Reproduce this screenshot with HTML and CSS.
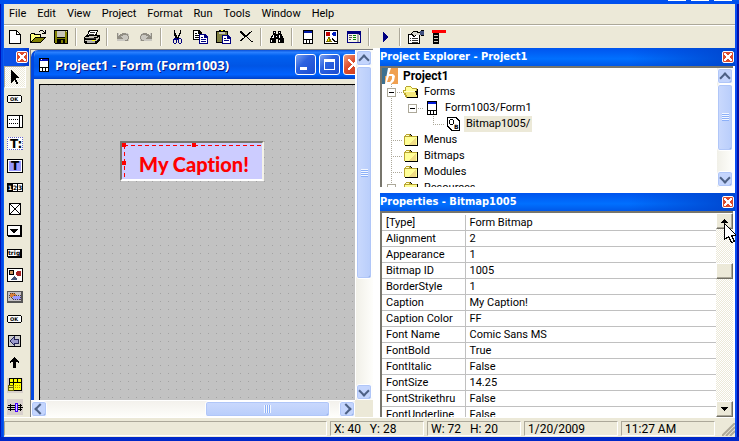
FILE: index.html
```html
<!DOCTYPE html>
<html lang="en">
<head>
<meta charset="utf-8">
<title>Project1</title>
<link rel="stylesheet" href="styles.css">
</head>
<body>
<div class="app">
  <div class="app-title"><span></span><span></span><span></span></div>

  <nav class="menu">
    <button>File</button><button>Edit</button><button>View</button><button>Project</button><button>Format</button><button>Run</button><button>Tools</button><button>Window</button><button>Help</button>
  </nav>

  <div class="toolbar">
    <button aria-label="New"><svg viewBox="0 0 16 16"><path d="M3 2h7l4 4v9H3z" fill="#fff"/><path d="M2 1h8v1H3v12h10V6h1v9H2zM9 2h2v1h1v1h1v1h1v1H9z" fill="#000"/><path d="M10 3h1v1h1v1h-2z" fill="#fff"/></svg></button>
    <button aria-label="Open"><svg viewBox="0 0 16 16"><path d="M0 5h1V4h4v1h6v4H5L1 14H0z" fill="#000"/><path d="M1 5h3v1h6v3H4l-3 4z" fill="#ffff80"/><path d="M1 14l4-6h11l-5 6z" fill="#000"/><path d="M2 13l3-4h9l-3 4z" fill="#808000"/><path d="M9 2h1V1h3v1h1v1h1V1h1v4h-4V4h2V3h-1V2h-3v1H9z" fill="#000"/></svg></button>
    <button aria-label="Save"><svg viewBox="0 0 16 16"><path d="M1 1h14v14H2l-1-1z" fill="#000"/><path d="M2 2h2v7h8V2h2v12H2z" fill="#808000"/><path d="M4 2h8v6H4zM13 2h1v1h-1zM10 11h2v3h-2z" fill="#c8c4b8"/><path d="M4 10h8v4h-2v-3H8v3H4z" fill="#000"/></svg></button>
    <i class="sep"></i>
    <button aria-label="Print"><svg viewBox="0 0 16 16"><path d="M5 1h9l-1 5h2l1 1v4l-3 3v1H1l-1-2V8l2-2h1z" fill="#000"/><path d="M6 2h7l-2 4H4z" fill="#fff"/><path d="M6 3h5v1H6zM5 5h5v1H5zM2 9h10v1H2z" fill="#333"/><path d="M2 7h11v1H1v1h11v2H1v1h12l2-3V8h-1v1h-2z" fill="#c8c4b8"/><path d="M3 12h8v2H3z" fill="#aaa"/><path d="M8 11h3v1H8z" fill="#ff0"/></svg></button>
    <i class="sep"></i>
    <button disabled aria-label="Undo"><svg viewBox="0 0 16 16"><path d="M2 4h2v2h1V5h2V4h5l2 2v6H2z" fill="#c9c7c0"/><path d="M2 4h1v3h1V6h1V5h2V4h4v1h2v2h1v3h-1v2h-3v-1h2v-1h1V7h-1V6H8v1H6v1h1v1h1v1H2z" fill="#918e84"/></svg></button>
    <button disabled aria-label="Redo"><svg viewBox="0 0 16 16"><path d="M14 4h-2v2h-1V5H9V4H4L2 6v6h12z" fill="#c9c7c0"/><path d="M14 4h-1v3h-1V6h-1V5H9V4H5v1H3v2H2v3h1v2h3v-1H4v-1H3V7h1V6h4v1h2v1H9v1H8v1h6z" fill="#918e84"/></svg></button>
    <i class="sep"></i>
    <button aria-label="Cut"><svg viewBox="0 0 16 16"><path d="M5 1h1v3h1v2h1v2h1V6h1V4h1V1h1v4h-1v2h-1v2H9v1H8v1H7V9H6V7H5z" fill="#000"/><path d="M5 9h3v1h1V9h3v1h1v4h-1v1h-2v-1H9v-3H8v3H7v1H5v-1H4v-4h1zM5 11v3h2v-3zM10 10v4h2v-4z" fill="#000080" fill-rule="evenodd"/></svg></button>
    <button aria-label="Copy"><svg viewBox="0 0 16 16"><path d="M1 1h6l3 3v7H1z" fill="#000"/><path d="M2 2h4v3h3v5H2z" fill="#fff"/><path d="M3 4h2v1H3zM3 6h4v1H3zM3 8h4v1H3z" fill="#000"/><path d="M7 5h6l3 3v7H7z" fill="#000080"/><path d="M8 6h4v3h3v5H8z" fill="#fff"/><path d="M9 8h2v1H9zM9 10h5v1H9zM9 12h5v1H9z" fill="#000080"/></svg></button>
    <button aria-label="Paste"><svg viewBox="0 0 16 16"><path d="M1 2h3V1h6v1h3v12H1z" fill="#000"/><path d="M2 3h10v10H2z" fill="#808040"/><path d="M4 3h6v2H4z" fill="#c8c4b8"/><path d="M6 1h2v1H6z" fill="#ff0"/><path d="M7 6h6l3 3v6H7z" fill="#000080"/><path d="M8 7h4v3h3v4H8z" fill="#fff"/><path d="M9 9h2v1H9zM9 11h5v1H9z" fill="#000080"/></svg></button>
    <button aria-label="Delete"><svg viewBox="0 0 16 16"><path d="M2 2h2v1h1v1h1v1h1v1h2V5h1V4h1V3h2V2h1v1h-1v1h-1v1h-1v1h-1v1H9v1h1v1h1v1h1v1h1v1h2v1h-2v-1h-1v-1h-1v-1h-1v-1H9v-1H7v1H6v1H5v1H4v1H2v-1h1v-1h1v-1h1V9h1V7H5V6H4V5H3V4H2z" fill="#000"/></svg></button>
    <i class="sep"></i>
    <button aria-label="Find"><svg viewBox="0 0 16 16"><path d="M4 2h3v3h2V2h3v3l1 1 2 4v4H9v-4H7v4H1v-4l2-4 1-1z" fill="#000"/><path d="M5 3h1v1H5zM10 3h1v1h-1zM4 6h1v3H3V8h1zM10 6h1v3h-1zM2 11h1v2H2zM10 11h1v2h-1zM7 7h1v1H7z" fill="#fff"/></svg></button>
    <i class="sep"></i>
    <button aria-label="Form"><svg viewBox="0 0 16 16"><path d="M3 1h10v14H3z" fill="#000"/><path d="M4 4h8v6H4zM4 11h2v3H4zM7 11h2v3H7zM10 11h2v3h-2z" fill="#fff"/><path d="M4 2h8v2H4z" fill="#0018a8"/></svg></button>
    <button aria-label="Bitmap"><svg viewBox="0 0 16 16"><path d="M1 1h14v14H1z" fill="#000"/><path d="M2 2h12v12H2z" fill="#fff"/><path d="M3 3h4v4H3z" fill="#c00000"/><path d="M10 3h2l1 1v2l-1 1h-2L9 6V4z" fill="#0020c0"/><path d="M6 8h1v2h1v2h1v1H3v-1h1v-2h1V8z" fill="#807000"/><path d="M5 10h1v2H5z" fill="#ff0"/><path d="M9 9h1v1h1v1h1v1h2v1h-3v-1h-1v-1H9z" fill="#000"/></svg></button>
    <button aria-label="Menu editor"><svg viewBox="0 0 16 16"><path d="M1 2h14v12H1z" fill="#000080"/><path d="M2 5h9v8H2zM13 6h1v7h-1z" fill="#f5f5e8"/><path d="M3 6h3v1H3zM3 8h3v1H3zM3 10h2v1H3z" fill="#555"/><path d="M7 6h3v1H7zM7 8h3v1H7zM7 10h3v1H7z" fill="#080"/><path d="M11 5h2v8h-2z" fill="#aaa"/></svg></button>
    <i class="sep"></i>
    <button aria-label="Run"><svg viewBox="0 0 16 16"><path d="M6 3h1v1h1v1h1v1h1v1h1v2h-1v1H9v1H8v1H7v1H6z" fill="#000080"/></svg></button>
    <i class="sep"></i>
    <button aria-label="Properties"><svg viewBox="0 0 16 16"><path d="M0 5h12v10H0z" fill="#000"/><path d="M1 6h10v8H1z" fill="#fff"/><path d="M2 9h1v1H2zM4 9h6v1H4zM2 11h1v1H2zM4 11h6v1H4zM4 13h6v1H4z" fill="#333"/><path d="M3 4l3-2h4v1h3V1h3v6h-3V6H9l-3 2-2-1z" fill="#000"/><path d="M4 4l2-1h3v1h4v2H8L6 7z" fill="#d8d8d0"/><path d="M12 2h4v4h-4z" fill="#405080"/></svg></button>
    <button aria-label="Code"><svg viewBox="0 0 16 16"><path d="M1 1h14v3H1z" fill="#f00"/><path d="M2 4h6v11H2z" fill="#000"/><path d="M3 6h4v1H3zM3 9h4v1H3zM3 12h4v1H3z" fill="#c8c4b8"/></svg></button>
  </div>

  <main class="main">
    <aside class="palette">
      <header class="palette-head"><button class="close" aria-label="Close toolbox"></button></header>
      <button class="on" aria-label="Pointer"><svg viewBox="0 0 16 16"><path d="M4 1h1v1h1v1h1v1h1v1h1v1h1v1h1v1h1v1h-3v2h1v2h1v2H9v-2H8v-2H7v1H6v1H5v1H4z" fill="#000"/></svg></button>
      <button aria-label="Button"><svg viewBox="0 0 16 16"><path d="M1 4h13v8H1zM0 5h15v6H0z"/><path d="M1 5h13v6H1z" fill="#fff"/><text x="3" y="10" class="t5">OK</text></svg></button>
      <button aria-label="List"><svg viewBox="0 0 16 16"><path d="M0 2h16v13H0z"/><path d="M1 3h11v11H1zM13 3h2v11h-2z" fill="#fff"/><path d="M2 6.500h10M2 10.500h10" stroke="#000" stroke-dasharray="1 1"/></svg></button>
      <button aria-label="Label"><svg viewBox="0 0 16 16"><path d="M0 2h16v13H0z" fill="#fff"/><path d="M.5 2.500h15v12H.5z" fill="none" stroke="#66c" stroke-dasharray="1 1"/><text x="3" y="13" class="t11">T:</text></svg></button>
      <button aria-label="Text field"><svg viewBox="0 0 16 16"><path d="M0 2h16v14H0z"/><path d="M1 3h14v12H1z" fill="#fff"/><path d="M2 4h12v10H2z" fill="#99f"/><text x="4" y="13" class="t11">T</text></svg></button>
      <button aria-label="Number"><svg viewBox="0 0 16 16"><path d="M0 4h16v9H0z"/><path d="M6 5h4v7H6zM11 5h4v7h-4z" fill="#fff"/><text x="1" y="11" class="t6 w">1</text><text x="6" y="11" class="t6">2</text><text x="11" y="11" class="t6">3</text></svg></button>
      <button aria-label="Check box"><svg viewBox="0 0 16 16"><path d="M2 2h12v12H2z"/><path d="M3 3h10v10H3z" fill="#fff"/><path d="M3 3l10 10M13 3L3 13" stroke="#000"/></svg></button>
      <button aria-label="Drop-down"><svg viewBox="0 0 16 16"><path d="M0 2h14l1 1v11H1l-1-1z"/><path d="M1 3h12v9H1z" fill="#fff"/><path d="M3 6h8v1h-1v1H9v1H8v1H6V9H5V8H4V7H3z"/></svg></button>
      <button aria-label="Trigger"><svg viewBox="0 0 16 16"><path d="M0 4h15v9H1l-1-1z"/><path d="M1 5h12v6H1z" fill="#fff"/><text x="1" y="10" class="t6">trig</text></svg></button>
      <button aria-label="Form bitmap"><svg viewBox="0 0 16 16"><path d="M0 1h16v14H0z"/><path d="M1 2h14v12H1z" fill="#fff"/><path d="M2 3h5v5H2z"/><path d="M3 4h3v3H3z" fill="#c96"/><path d="M10 4h3l1 1v3l-1 1h-3L9 8V5z" fill="#a22"/><path d="M7 9h1v1h1v1h1v2H4v-1h1v-1h1v-1h1z" fill="#457"/></svg></button>
      <button aria-label="Gadget"><svg viewBox="0 0 16 16"><path d="M0 2h16v12H0z" fill="#555"/><path d="M1 3h13v9H1z" fill="#c4c0c4"/><path d="M3 4h4v1h2v3H3z" fill="#d9803c"/><path d="M6 7h8v4H6z" fill="#99f"/><path d="M2.500 4.500h5v2h6v4h-8v-2h-3z" fill="none" stroke="#543" stroke-dasharray="1 1"/></svg></button>
      <button aria-label="Repeat button"><svg viewBox="0 0 16 16"><path d="M1 4h13v8H1zM0 5h15v6H0z"/><path d="M1 5h13v6H1z" fill="#fff"/><text x="3" y="10" class="t5">OK</text></svg></button>
      <button aria-label="Shift"><svg viewBox="0 0 16 16"><path d="M1 2h13v12H1z"/><path d="M2 3h11v10H2z" fill="#ccc"/><path d="M3 8l4-4v2h4v4H7v2z" fill="#99c" stroke="#225"/></svg></button>
      <button aria-label="Graffiti"><svg viewBox="0 0 16 16"><path d="M7 2h1v1h1v1h1v1h1v1h1v2h-1V7H9v6H6V7H4v1H3V6h1V5h1V4h1V3h1z"/></svg></button>
      <button aria-label="Table"><svg viewBox="0 0 16 16"><path d="M0 1h16v15H0z" fill="#d8d0cc"/><path d="M2 1h13v13H2z"/><path d="M3 2h3v3H3zM7 2h3v3H7zM11 2h3v3h-3zM3 6h3v2H3zM7 6h7v7H7z" fill="#ff0"/><path d="M8 8.500h6M8 10.500h6" stroke="#b90" stroke-dasharray="1 1"/><circle cx="4" cy="11" r="3" fill="#ee5" stroke="#660"/><path d="M2 10h4v1H2z" fill="#660"/></svg></button>
      <button aria-label="Slider"><svg viewBox="0 0 16 16"><path d="M0 0h16v16H0z" fill="#d8d0cc"/><path d="M1 6h14v1H1zM0 8h16v1H0zM1 10h14v1H1zM3 5h1v7H3zM13 5h1v7h-1z"/><path d="M8.500 4.500h2v8h-2z" fill="#dcf" stroke="#40f"/></svg></button>
    </aside>

    <section class="mdi">
      <div class="form-window">
        <header class="form-title">
          <svg viewBox="0 0 10 14"><path d="M0 0h10v14H0z"/><path d="M1 3h8v6H1zM1 10h2v3H1zM4 10h2v3H4zM7 10h2v3H7z" fill="#fff"/><path d="M1 1h8v2H1z" fill="#0010c0"/><path d="M2 1h1v1H2z" fill="#fff"/></svg>
          <h1>Project1 - Form (Form1003)</h1>
          <button class="win-btn min" aria-label="Minimize"></button>
          <button class="win-btn max" aria-label="Maximize"></button>
          <button class="win-btn end" aria-label="Close"></button>
        </header>
        <div class="canvas">
          <div class="bitmap">
            <span class="caption">My Caption!</span>
            <i class="handle tl"></i><i class="handle tm"></i><i class="handle ml"></i>
          </div>
        </div>
      </div>
      <div class="xp-scroll vert">
        <button class="arrow up" aria-label="Scroll up"></button>
        <div class="track"><div class="thumb form-v"><i></i></div></div>
        <button class="arrow down" aria-label="Scroll down"></button>
      </div>
      <div class="xp-scroll horz">
        <button class="arrow left" aria-label="Scroll left"></button>
        <div class="track"><div class="thumb form-h"><i></i></div></div>
        <button class="arrow right" aria-label="Scroll right"></button>
      </div>
    </section>

    <div class="docks">
      <section class="dock explorer">
        <header class="dock-title"><h2>Project Explorer - Project1</h2><button class="close" aria-label="Close explorer"></button></header>
        <div class="dock-body">
          <ul class="tree">
            <li><svg viewBox="0 0 16 16"><path d="M0 0h16v16H0z" fill="#f0a050"/><path d="M0 0h7v8H3v8H0z" fill="#3d7191"/><path d="M6 0h3L7 6h4l2 2-1 5-3 3H3zm1 8l-2 6h3l2-3V8z" fill="#fff" fill-rule="evenodd" shape-rendering="auto"/></svg><b>Project1</b></li>
            <li><i class="cell v h"><span class="toggle"></span></i><svg viewBox="0 0 16 16"><path d="M2 3h1V2h5v1h1v1h5v1h1v8h-1v1H3v-1H2v-2H1V9H0V6h2z" fill="#b9a52f"/><path d="M3 3h5v1h1v1h4v2H3z" fill="#ffff98"/><path d="M1 7h11v2h1v2h1v2H4v-2H3V9H1z" fill="#f6ea7c"/><path d="M1 7h11v1H1z" fill="#ffc"/><path d="M14 5h1v9H4v-1h10v-2h-1V8h-1V7h2z"/></svg><span>Forms</span></li>
            <li><i class="cell v"></i><i class="cell h"><span class="toggle"></span></i><svg viewBox="0 0 16 16"><path d="M3 1h10v14H3z"/><path d="M4 4h8v6H4zM4 11h2v3H4zM7 11h2v3H7zM10 11h2v3h-2z" fill="#fff"/><path d="M4 2h8v2H4z" fill="#0018d8"/></svg><span>Form1003/Form1</span></li>
            <li><i class="cell v"></i><i class="cell"></i><i class="cell v half h"></i><svg viewBox="0 0 16 16"><path d="M2 1h9l4 3v11H6l-4-4z"/><path d="M3 2h7l4 3v9H7l-4-4z" fill="#fff"/><path d="M4 4h1v4H4zM8 4h1v4H8zM5 3h3v1H5zM5 8h3v1H5z"/><text x="9" y="13" class="t6">B</text></svg><span class="picked">Bitmap1005/</span></li>
            <li><i class="cell v h"></i><svg viewBox="0 0 16 16"><use href="#folder"/></svg><span>Menus</span></li>
            <li><i class="cell v h"></i><svg viewBox="0 0 16 16"><use href="#folder"/></svg><span>Bitmaps</span></li>
            <li><i class="cell v h"></i><svg viewBox="0 0 16 16"><use href="#folder"/></svg><span>Modules</span></li>
            <li><i class="cell v h"><span class="toggle"></span></i><svg viewBox="0 0 16 16"><g id="folder"><path d="M1 4l2-2h4l2 2h6v10H2l-1-1z"/><path d="M1 4l2-2h3l2 2h6v9H1z" fill="#b9a52f"/><path d="M2 5h12v8H2z" fill="#ffff98"/><path d="M13 6v7H5z" fill="#f1dd85"/><path d="M3 3h3v1H3z" fill="#ffc"/></g></svg><span>Resources</span></li>
          </ul>
          <div class="xp-scroll vert">
            <button class="arrow up" aria-label="Scroll up"></button>
            <div class="track"><div class="thumb tree-v"><i></i></div></div>
            <button class="arrow down" aria-label="Scroll down"></button>
          </div>
        </div>
      </section>

      <section class="dock properties">
        <header class="dock-title"><h2>Properties - Bitmap1005</h2><button class="close" aria-label="Close properties"></button></header>
        <div class="dock-body">
          <div class="grid">
            <table>
              <tr><th>[Type]</th><td>Form Bitmap</td></tr>
              <tr><th>Alignment</th><td>2</td></tr>
              <tr><th>Appearance</th><td>1</td></tr>
              <tr><th>Bitmap ID</th><td>1005</td></tr>
              <tr><th>BorderStyle</th><td>1</td></tr>
              <tr><th>Caption</th><td>My Caption!</td></tr>
              <tr><th>Caption Color</th><td>FF</td></tr>
              <tr><th>Font Name</th><td>Comic Sans MS</td></tr>
              <tr><th>FontBold</th><td>True</td></tr>
              <tr><th>FontItalic</th><td>False</td></tr>
              <tr><th>FontSize</th><td>14.25</td></tr>
              <tr><th>FontStrikethru</th><td>False</td></tr>
              <tr><th>FontUnderline</th><td>False</td></tr>
            </table>
          </div>
          <div class="classic-scroll">
            <button aria-label="Scroll up"><svg viewBox="0 0 8 8"><path d="M3 2h1v1h1v1h1v1h1v1H0V5h1V4h1V3h1z"/></svg>
              <svg class="pointer" viewBox="0 0 12 21"><path d="M.5.5v16l4-3 3 6 3-1-3-6h5z" fill="#fff" stroke="#000"/></svg></button>
            <div class="classic-track"><div class="classic-thumb"></div></div>
            <button aria-label="Scroll down"><svg viewBox="0 0 8 8"><path d="M0 2h7v1H6v1H5v1H4v1H3V5H2V4H1V3H0z"/></svg></button>
          </div>
        </div>
      </section>
    </div>
  </main>

  <footer class="status">
    <span></span>
    <span>X: 40&nbsp;&nbsp; Y: 28</span>
    <span>W: 72&nbsp;&nbsp; H: 20</span>
    <span>1/20/2009</span>
    <span>11:27 AM</span>
    <svg viewBox="0 0 13 13"><path d="M0 13L13 0M4 13l9-9M8 13l5-5" stroke="#aca899" stroke-width="2"/></svg>
  </footer>
</div>
</body>
</html>
```
FILE: styles.css
```css
* { box-sizing: border-box; }
body {
  margin: 0;
  font: 11px/16px Roboto, "Liberation Sans", sans-serif;
  color: #000;
  background: #ece9d8;
}
button { padding: 0; border: 0; background: none; font: inherit; color: inherit; display: block; }
svg { display: block; width: 16px; height: 16px; flex: none; shape-rendering: crispEdges; }
h1, h2, ul { margin: 0; padding: 0; }
i { font-style: normal; }
svg text { font-family: "DejaVu Sans", sans-serif; font-weight: bold; }
.t5 { font-size: 5px; }
.t6 { font-size: 6px; }
.t11 { font-size: 12px; }
.w { fill: #fff; }

.app {
  height: 100vh;
  display: flex;
  flex-direction: column;
  background: linear-gradient(90deg, #0010b8 0 1px, #0048e8 1px 3px, #0a5cf0 3px 4px, transparent 4px calc(100% - 4px), #0a4cf0 calc(100% - 4px) calc(100% - 2px), #0010a8 calc(100% - 2px)) #ece9d8;
  padding: 0 4px;
  border-bottom: 4px solid #0028c8;
  overflow: hidden;
}
.app-title { height: 4px; margin: 0 -4px; padding-right: 7px; background: #0050ee; display: flex; justify-content: flex-end; gap: 5px; flex: none; }
.app-title span { width: 18px; height: 1px; background: #fff; }

.menu { height: 22px; display: flex; align-items: center; gap: 1px; padding-bottom: 2px; border-bottom: 1px solid #fff; box-shadow: inset 0 -1px #aca899; flex: none; }
.menu button { padding: 0 5px; }

.toolbar { height: 22px; display: flex; align-items: center; margin-left: -1px; flex: none; }
.toolbar button { width: 23px; height: 22px; display: grid; place-items: center; flex: none; }
.sep { width: 8px; height: 18px; background: linear-gradient(90deg, transparent 3px, #aca899 3px 4px, #fff 4px 5px, transparent 5px); flex: none; }

.main { flex: 1; min-height: 0; display: grid; grid-template-columns: 26px 343fr 362fr; }

.palette { display: flex; flex-direction: column; overflow: hidden; }
.palette-head { height: 18px; flex: none; margin-right: 1px; display: flex; justify-content: flex-end; align-items: center; padding-right: 1px; background: linear-gradient(90deg, #0a52e8, #0a52e8 60%, #0038d0); }
.palette > button { height: 22px; flex: none; width: 22px; display: grid; place-items: center; }
.palette > .on { background: repeating-conic-gradient(#fff 0 25%, #ece9d8 0 50%) 0 0 / 2px 2px; border: 1px solid #fff; border-top-color: #aca899; border-left-color: #aca899; }

.close { width: 12px; height: 12px; flex: none; border: 1px solid #fff; border-radius: 2px;
  background:
    linear-gradient(45deg, transparent 42%, #fff 42% 58%, transparent 58%) center / 8px 8px no-repeat,
    linear-gradient(-45deg, transparent 42%, #fff 42% 58%, transparent 58%) center / 8px 8px no-repeat,
    #dc4c2c; }

.mdi { display: grid; grid-template-columns: 1fr 18px; grid-template-rows: 1fr 17px; min-height: 0; border: solid #808080; border-width: 1px 0 0 1px; margin-top: 1px; }
.form-window { overflow: hidden; min-width: 0; min-height: 0; display: flex; flex-direction: column; border-left: 3px solid #0048e0; border-top-left-radius: 7px; background: #ece9d8; }
.form-title { height: 29px; flex: none; display: flex; align-items: center; gap: 3px; margin-right: -9px; padding-left: 5px; background: linear-gradient(#0a4fd8, #2a80ff 8%, #0060f0 20%, #0055e5 55%, #0062ff 85%, #0040c8); }
.form-title svg { width: 10px; height: 14px; }
.form-title h1 { flex: 1; margin-left: 3px; font: bold 13px/20px "Open Sans", sans-serif; color: #fff; text-shadow: 1px 1px #0a1883; white-space: nowrap; }
.win-btn { width: 21px; height: 21px; flex: none; border: 1px solid #fff; border-radius: 3px; background: linear-gradient(135deg, #7ba2f0, #2c62e0 40%, #1c4cd0); position: relative; }
.win-btn::before { content: ""; position: absolute; }
.min::before { left: 4px; bottom: 4px; width: 7px; height: 3px; background: #fff; }
.max::before { inset: 4px; border: 1px solid #fff; border-top-width: 3px; }
.end { background: linear-gradient(135deg, #f0a080, #e05030 40%, #c83818); }
.end::before { inset: 4px; background: linear-gradient(45deg, transparent 42%, #fff 42% 58%, transparent 58%), linear-gradient(-45deg, transparent 42%, #fff 42% 58%, transparent 58%); }
.canvas { flex: 1; position: relative; margin: 5px 0 0 5px; border: solid #000; border-width: 1px 0 0 1px; background: conic-gradient(from 270deg at 1px 1px, #a2a2a2 90deg, #c2c2c2 0) 0 0 / 8px 8px; }
.bitmap { position: absolute; left: 80px; top: 56px; width: 144px; height: 40px; display: grid; place-items: center; background: #ccccff; border: 2px solid; border-color: #77756c #f4f2e8 #fff #77756c; }
.bitmap::before { content: ""; position: absolute; inset: 2px 0 0 2px;
  background:
    repeating-linear-gradient(90deg, #f00 0 4px, transparent 4px 7px) 0 0 / 100% 1px no-repeat,
    repeating-linear-gradient(#f00 0 4px, transparent 4px 7px) 0 0 / 1px 100% no-repeat; }
.caption { font: 900 20px/24px Lato, sans-serif; font-variant-ligatures: none; color: #f00; padding: 6px 0 0 4px; }
.handle { position: absolute; width: 4px; height: 4px; background: #f00; }
.tl { left: 0; top: 0; }
.tm { left: 50%; top: 0; }
.ml { left: 0; top: 50%; }

.xp-scroll { display: flex; background: linear-gradient(90deg, #f1f0e8, #fefefb); border: solid #fff; border-width: 0 0 0 1px; min-height: 0; }
.xp-scroll.vert { flex-direction: column; }
.xp-scroll.horz { background: linear-gradient(#f3f1ec, #fefefb); border-width: 1px 0 0; }
.track { flex: 1; display: flex; min-height: 0; min-width: 0; }
.vert .track { flex-direction: column; }
.arrow, .thumb { border: 1px solid #fff; border-radius: 3px; box-shadow: inset 0 0 0 1px #b0c6f8, inset -1px -1px #7f9fdc; background: #c4d5fd; flex: none; display: grid; place-items: center; }
.arrow { width: 16px; height: 16px; }
.arrow::before { content: ""; width: 6px; height: 6px; border: solid #4d6185; border-width: 2px 0 0 2px; }
.up::before { transform: translateY(2px) rotate(45deg); }
.down::before { transform: translateY(-1px) rotate(225deg); }
.left::before { transform: translateX(1px) rotate(-45deg); }
.right::before { transform: translateX(-1px) rotate(135deg); }
.vert .thumb { width: 16px; background: linear-gradient(90deg, #cad9fd, #b8cdfb); }
.horz .thumb { height: 16px; background: linear-gradient(#cad9fd, #b8cdfb); }
.thumb i { width: 7px; height: 8px; background: repeating-linear-gradient(#f4f8ff 0 1px, #8cb0f8 1px 2px); }
.horz .thumb i { background: repeating-linear-gradient(90deg, #f4f8ff 0 1px, #8cb0f8 1px 2px); }
.form-v { height: 67%; }
.form-h { width: 43%; margin-left: 54%; }
.tree-v { height: 77%; }

.docks { display: flex; flex-direction: column; min-height: 0; min-width: 0; padding-left: 7px; background: #fff; }
.dock { display: flex; flex-direction: column; min-height: 0; }
.explorer { flex: 145; }
.properties { flex: 224; }
.dock-title { height: 18px; flex: none; display: flex; align-items: center; justify-content: space-between; padding-right: 1px; background: linear-gradient(90deg, transparent 70%, #0048d0), linear-gradient(#0054ee, #0070ff 60%, #0058e8); }
.dock-title h2 { font: bold 11px/16px "DejaVu Sans Condensed", "DejaVu Sans", sans-serif; color: #fff; white-space: nowrap; }
.dock-body { flex: 1; min-height: 0; display: flex; border: solid #77756c; border-width: 2px 0 0 2px; margin-right: 2px; background: #fff; }
.explorer .dock-body { margin-bottom: 6px; }
.tree { flex: 1; list-style: none; overflow: hidden; }
.tree li { height: 16px; display: flex; align-items: center; white-space: nowrap; }
.tree li > span, .tree b { margin-left: 3px; padding: 0 2px; }
.tree b { font-size: 12px; }
.cell { width: 21px; height: 16px; flex: none; position: relative; }
.cell::before, .cell::after { position: absolute; left: 9px; }
.v::before { content: ""; top: 0; bottom: 0; width: 1px; background: repeating-linear-gradient(#aca899 0 1px, transparent 1px 2px); }
.half::before { bottom: 8px; }
.h::after { content: ""; top: 8px; width: 12px; height: 1px; background: repeating-linear-gradient(90deg, #aca899 0 1px, transparent 1px 2px); }
.toggle { position: absolute; z-index: 1; left: 5px; top: 4px; width: 9px; height: 9px; border: 1px solid #aca899; background: linear-gradient(#000, #000) center / 5px 1px no-repeat #fff; }
.picked { background: #ece9d8; }

.grid { flex: 1; overflow: hidden; padding-top: 2px; }
table { width: 100%; border-collapse: separate; border-spacing: 0; table-layout: fixed; }
th, td { height: 16px; padding: 0 4px; line-height: 15px; font-weight: normal; text-align: left; border-bottom: 1px solid #c0c0c0; white-space: nowrap; }
th { width: 25%; border-right: 1px solid #c0c0c0; }

.classic-scroll { width: 17px; display: flex; flex-direction: column; flex: none; }
.classic-scroll button, .classic-thumb { width: 17px; height: 16px; flex: none; display: grid; place-items: center; background: #ece9d8; border: 1px solid; border-color: #fff #716f64 #716f64 #fff; box-shadow: inset -1px -1px #aca899; }
.classic-scroll button { position: relative; }
.classic-scroll button svg { width: 8px; height: 8px; }
.classic-scroll button .pointer { position: absolute; z-index: 2; left: 7px; top: 9px; width: 12px; height: 21px; }
.classic-track { flex: 1; display: flex; flex-direction: column; background: repeating-conic-gradient(#fff 0 25%, #ece9d8 0 50%) 0 0 / 2px 2px; }
.classic-track::before { content: ""; height: 20%; }

.status { height: 20px; flex: none; display: grid; grid-template-columns: 323fr 94fr 94fr 94fr 94fr 17px; column-gap: 3px; padding: 3px 0 1px; border-top: 1px solid #fff; font-size: 12px; }
.status span { padding: 0 3px; line-height: 15px; border: 1px solid; border-color: #aca899 #fff #fff #aca899; white-space: nowrap; overflow: hidden; }
.status svg { width: 13px; height: 13px; align-self: end; justify-self: end; shape-rendering: auto; }
```
